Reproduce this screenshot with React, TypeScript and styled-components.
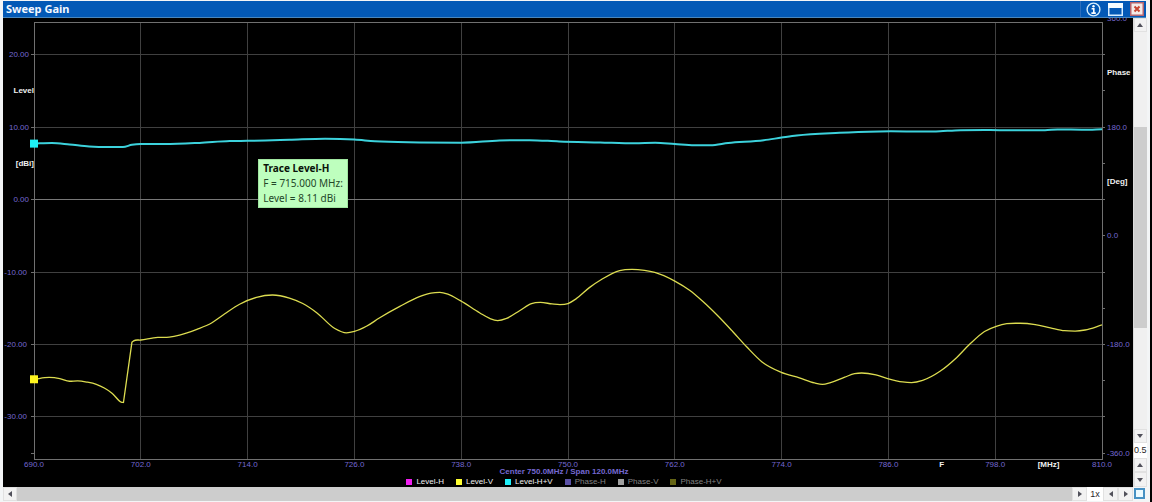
import React from "react";
import styled, { createGlobalStyle } from "styled-components";

type Sample = [number, number];

const F_MIN = 690;
const F_MAX = 810;
const LEVEL_MAX = 24.5;
const LEVEL_MIN = -35.8;
const SPAN = F_MAX - F_MIN;
const RANGE = LEVEL_MAX - LEVEL_MIN;

const xPos = (mhz: number) => `${((mhz - F_MIN) / SPAN) * 100}%`;
const yPos = (level: number) => `${((LEVEL_MAX - level) / RANGE) * 100}%`;
/* 180 degrees of phase cover 15 dB of level, with 180 deg on the 10 dBi line */
const phaseToLevel = (deg: number) => 10 + (deg - 180) / 12;

const LEVEL_HV: Sample[] = [
  [690, 7.72], [692, 7.8], [694, 7.6], [696.2, 7.33], [698.5, 7.25], [700, 7.25], [701, 7.55], [702, 7.65],
  [704.7, 7.65], [708.6, 7.82], [712, 8.07], [714, 8.1], [718.7, 8.25], [722.7, 8.4], [726, 8.28], [728.3, 8.03],
  [733.3, 7.88], [738, 7.84], [742.3, 8.15], [745.7, 8.2], [749, 8.02], [753.6, 7.88], [757.5, 7.76],
  [759.8, 7.85], [762, 7.67], [764.2, 7.5], [766, 7.5], [768, 7.8], [772, 8.18], [774, 8.55], [775.7, 8.85],
  [780.5, 9.22], [785, 9.4], [791.8, 9.43], [793.5, 9.53], [798.5, 9.58], [803.6, 9.58], [805, 9.67],
  [808, 9.63], [810, 9.7],
];

const LEVEL_V: Sample[] = [
  [690, -24.8], [691.7, -24.55], [692.9, -24.7], [694, -25.07], [694.9, -25.02], [696, -25.2], [697, -25.5],
  [697.9, -26], [698.8, -26.75], [699.8, -27.95], [700.05, -28], [701, -19.7], [701.2, -19.5], [702, -19.38],
  [703.9, -19.03], [705.2, -18.97], [706.35, -18.7], [708.3, -17.9], [709.95, -17.03], [711.4, -15.8],
  [713.1, -14.45], [715, -13.5], [716.8, -13.17], [718.7, -13.6], [720.2, -14.35], [721.8, -15.65],
  [723.8, -17.8], [725.1, -18.4], [726, -18.2], [727.4, -17.45], [728.8, -16.35], [731.1, -14.75],
  [733.3, -13.4], [734.6, -12.9], [735.6, -12.8], [736.5, -13.05], [737.9, -13.95], [740.1, -15.65],
  [741.2, -16.4], [742.1, -16.7], [743.1, -16.4], [744.6, -15.3], [745.9, -14.35], [746.9, -14.2],
  [748.2, -14.4], [749.1, -14.5], [750, -14.35], [750.9, -13.7], [752.4, -12.15], [753.8, -11],
  [755.8, -9.8], [757.2, -9.63], [758.6, -9.77], [759.75, -10.05], [762, -11.25], [763.7, -12.55],
  [765.1, -14], [766.8, -16], [768.5, -18.2], [770.1, -20.35], [771.8, -22.4], [773.9, -23.8],
  [776, -24.6], [777.7, -25.3], [778.6, -25.5], [779.5, -25.25], [781.1, -24.5], [782.2, -24.03],
  [783, -23.93], [784.6, -24.2], [785.9, -24.7], [787.6, -25.17], [788.6, -25.25], [789.85, -24.95],
  [791.8, -23.7], [793.5, -22], [795.1, -20], [796.8, -18.2], [798.2, -17.45], [799.3, -17.13],
  [800.8, -17.07], [802.5, -17.25], [804.2, -17.7], [805.8, -18.1], [807, -18.15], [808.1, -18],
  [810, -17.3],
];

/* A jump steeper than this many dB per MHz is drawn as a straight step. */
const STEP = 5;

/* Smooth cubic through the samples; tangents are flat at local extremes. */
function tracePath(samples: Sample[]): string {
  const rise = (i: number) =>
    (samples[i + 1][1] - samples[i][1]) / (samples[i + 1][0] - samples[i][0]);
  const slopes = samples.map((_, i) => {
    if (i === 0) return rise(0);
    if (i === samples.length - 1) return rise(i - 1);
    const before = rise(i - 1);
    const after = rise(i);
    if (Math.abs(before) > STEP) return after;
    if (Math.abs(after) > STEP) return before;
    if (before * after <= 0) return 0;
    const w = (samples[i][0] - samples[i - 1][0]) / (samples[i + 1][0] - samples[i - 1][0]);
    return before * (1 - w) + after * w;
  });
  return samples.reduce((d, [x, y], i) => {
    if (i === 0) return `M${x} ${-y}`;
    if (Math.abs(rise(i - 1)) > STEP) return `${d}L${x} ${-y}`;
    const [px, py] = samples[i - 1];
    const h = (x - px) / 3;
    return `${d}C${px + h} ${-(py + slopes[i - 1] * h)} ${x - h} ${-(y - slopes[i] * h)} ${x} ${-y}`;
  }, "");
}

const FREQS = [690, 702, 714, 726, 738, 750, 762, 774, 786, 798, 810];
const LEVELS = [20, 10, 0, -10, -20, -30];
const HALF_LEVELS = [15, 5, -5, -15, -25, -35];
const PHASES = [360, 180, 0, -180, -360];

const LEGEND = [
  { name: "Level-H", color: "#f01ef0", on: true },
  { name: "Level-V", color: "#ffff32", on: true },
  { name: "Level-H+V", color: "#1ef0fa", on: true },
  { name: "Phase-H", color: "#5a50a5", on: false },
  { name: "Phase-V", color: "#a0a0a0", on: false },
  { name: "Phase-H+V", color: "#646414", on: false },
];

const GlobalStyle = createGlobalStyle`
  * { box-sizing: border-box; }
  body { margin: 0; background: #000; }
`;

const Shell = styled.main`
  display: flex;
  flex-direction: column;
  height: 100vh;
  min-height: 320px;
  padding: 1px 4px 2px 3px;
  border-right: 2px solid #000;
  background: #f3f5f6;
  overflow: hidden;
`;

const TitleBar = styled.header`
  display: flex;
  align-items: center;
  flex: none;
  height: 17px;
  padding: 0 2px 0 3px;
  background: #0359b6;
  border-bottom: 1px solid #4a87bd;
`;

const Title = styled.h1`
  flex: 1;
  margin: 0;
  color: #f4f8ff;
  font: bold 11px/16px "Noto Sans", "Open Sans", sans-serif;
`;

const TitleTools = styled.div`
  display: flex;
  align-items: center;
  gap: 7px;
  height: 16px;
  padding-left: 5px;
  border-left: 1px solid #2c6fbe;
`;

const ToolButton = styled.button`
  display: flex;
  padding: 0;
  border: 0;
  background: none;

  svg { display: block; }
`;

const Body = styled.div`
  display: grid;
  grid-template: minmax(0, 1fr) 13px / minmax(0, 1fr) 13px;
  flex: 1;
  min-height: 0;
`;

const Chart = styled.section`
  position: relative;
  display: grid;
  grid-template: 4px minmax(0, 1fr) 28px / 31px minmax(0, 1fr) 31px;
  background: #000;
  overflow: hidden;
`;

const PlotArea = styled.div`
  position: relative;
  grid-area: 2 / 2;
`;

const Drawing = styled.svg`
  display: block;
  width: 100%;
  height: 100%;
  overflow: visible;
`;

const SideAxis = styled.svg<{ $column: number }>`
  grid-area: 2 / ${(p) => p.$column};
  width: 100%;
  height: 100%;
  overflow: visible;
`;

const AxisText = styled.text<{ $strong?: boolean }>`
  fill: ${(p) => (p.$strong ? "#f0f0f0" : "#7468d2")};
  font: ${(p) => (p.$strong ? "bold" : "normal")} 8px "Liberation Sans", Arial, sans-serif;
  dominant-baseline: central;
`;

const BottomAxis = styled.svg`
  grid-area: 3 / 2;
  width: 100%;
  height: 10px;
  overflow: visible;
`;

const Footer = styled.div`
  grid-area: 3 / 1 / 4 / 4;
  display: flex;
  flex-direction: column;
  align-items: center;
  padding: 8px 8px 0 0;
`;

const Caption = styled.p`
  margin: 0;
  color: #7468d2;
  font: bold 8px/10px "Liberation Sans", Arial, sans-serif;
`;

const Legend = styled.ul`
  display: flex;
  gap: 12px;
  margin: 0;
  padding: 0;
  list-style: none;
`;

const LegendItem = styled.li<{ $color: string; $on: boolean }>`
  display: flex;
  align-items: center;
  gap: 4px;
  color: ${(p) => (p.$on ? "#f0f0f0" : "#828282")};
  font: 8px/10px "Liberation Sans", Arial, sans-serif;

  &::before {
    content: "";
    width: 6px;
    height: 6px;
    background: ${(p) => p.$color};
  }
`;

const Tooltip = styled.div`
  position: absolute;
  margin-top: 18px;
  padding: 1px 4px;
  border: 1px solid #a0e6a0;
  background: #beffbe;
  color: #234628;
  font: 10px/15px "Noto Sans", "Open Sans", sans-serif;
  white-space: nowrap;

  strong { display: block; color: #0a140a; }
`;

const VerticalBar = styled.div`
  display: grid;
  grid-template-rows: 14px minmax(0, 1fr) 14px 15px 14px 15px;
  background: #f0f0f0;
  border-left: 1px solid #dcdcdc;
`;

const HorizontalBar = styled.div`
  display: grid;
  grid-template-columns: 14px minmax(0, 1fr) 15px 16px 15px 15px;
  background: #f0f0f0;
`;

const VerticalTrack = styled.div`
  display: grid;
  grid-template-rows: 95fr 201fr 101fr;
  background: #f0f0f0;
`;

const VerticalThumb = styled.div`
  grid-row: 2;
  background: #cdcdcd;
`;

const HorizontalTrack = styled.div`
  background: #cdcdcd;
`;

const ArrowButton = styled.button`
  display: grid;
  place-items: center;
  min-width: 0;
  padding: 0;
  border: 1px solid #e1e1e1;
  background: #f2f2f2;

  svg { display: block; }
`;

const Zoom = styled.output`
  background: #fff;
  color: #282828;
  font: 9px/14px "Liberation Sans", Arial, sans-serif;
  text-align: center;
`;

const FitButton = styled.button`
  margin: 1px;
  padding: 0;
  border: 2px solid #4691c3;
  background: #ebfaff;
`;

const ARROWS = {
  up: "M4 2 7 6H1Z",
  down: "M1 2H7L4 6Z",
  left: "M6 1V7L2 4Z",
  right: "M2 1V7L6 4Z",
};

function Arrow({ to, label }: { to: keyof typeof ARROWS; label: string }) {
  return (
    <ArrowButton type="button" aria-label={label}>
      <svg width="8" height="8" viewBox="0 0 8 8">
        <path d={ARROWS[to]} fill="#50505a" />
      </svg>
    </ArrowButton>
  );
}

function WindowTools() {
  return (
    <TitleTools>
      <ToolButton type="button" aria-label="Information">
        <svg width="15" height="15" viewBox="0 0 15 15">
          <circle cx="7.5" cy="7.5" r="6.4" fill="none" stroke="#d7f0ff" strokeWidth="1.4" />
          <circle cx="7.5" cy="4.3" r="1.2" fill="#fff" />
          <path d="M5.6 6.7H7.8V11M5.4 11.1H9.8" fill="none" stroke="#fff" strokeWidth="1.6" />
        </svg>
      </ToolButton>
      <ToolButton type="button" aria-label="Maximize">
        <svg width="15" height="13" viewBox="0 0 15 13">
          <rect x="0.75" y="0.75" width="13.5" height="11.5" fill="none" stroke="#d2ebff" strokeWidth="1.5" />
          <rect width="15" height="5" fill="#f5fcff" />
        </svg>
      </ToolButton>
      <ToolButton type="button" aria-label="Close">
        <svg width="14" height="14" viewBox="0 0 14 14">
          <rect x="0.75" y="0.75" width="12.5" height="12.5" fill="#f5ebe8" stroke="#b4646e" strokeWidth="1.5" />
          <path d="M4.5 4.5 9.5 9.5M9.5 4.5 4.5 9.5" stroke="#c84632" strokeWidth="2" />
        </svg>
      </ToolButton>
    </TitleTools>
  );
}

function Plot() {
  return (
    <PlotArea>
      <Drawing role="img" aria-label="Gain over frequency">
        <g stroke="#404040" shapeRendering="crispEdges">
          {FREQS.slice(1, -1).map((f) => (
            <line key={f} x1={xPos(f)} x2={xPos(f)} y1="0" y2="100%" />
          ))}
          {LEVELS.map((l) => (
            <line key={l} x1="0" x2="100%" y1={yPos(l)} y2={yPos(l)} stroke={l === 0 ? "#787878" : undefined} />
          ))}
        </g>
        <g stroke="#707070" shapeRendering="crispEdges">
          {[...LEVELS, -35].map((l) => (
            <line key={l} x1="-3" x2="0" y1={yPos(l)} y2={yPos(l)} />
          ))}
          <svg x="100%" overflow="visible">
            {[...LEVELS, ...HALF_LEVELS].map((l) => (
              <line key={l} x1="0" x2="3" y1={yPos(l)} y2={yPos(l)} />
            ))}
          </svg>
          <rect width="100%" height="100%" fill="none" />
        </g>
        <svg
          width="100%"
          height="100%"
          viewBox={`${F_MIN} ${-LEVEL_MAX} ${SPAN} ${RANGE}`}
          preserveAspectRatio="none"
          fill="none"
        >
          <path d={tracePath(LEVEL_V)} stroke="#dcdc50" strokeWidth="1.3" vectorEffect="non-scaling-stroke" />
          <path d={tracePath(LEVEL_HV)} stroke="#3cd2dc" strokeWidth="2" vectorEffect="non-scaling-stroke" />
        </svg>
        <svg x="-4" y="-4" overflow="visible">
          <rect y={yPos(LEVEL_HV[0][1])} width="8" height="8" fill="#1ef0f5" />
          <rect y={yPos(LEVEL_V[0][1])} width="8" height="8" fill="#fff51e" />
        </svg>
      </Drawing>
      <Tooltip role="tooltip" style={{ left: xPos(715.2), top: yPos(8.11) }}>
        <strong>Trace Level-H</strong>
        F = 715.000 MHz:
        <br />
        Level = 8.11 dBi
      </Tooltip>
    </PlotArea>
  );
}

export default function App() {
  return (
    <>
      <GlobalStyle />
      <Shell>
        <TitleBar>
          <Title>Sweep Gain</Title>
          <WindowTools />
        </TitleBar>
        <Body>
          <Chart>
            <SideAxis $column={1}>
              {LEVELS.map((l) => (
                <AxisText key={l} x={l < 0 ? 24 : 26} y={yPos(l)} textAnchor="end">
                  {l.toFixed(2)}
                </AxisText>
              ))}
              <AxisText $strong x="31" y={yPos(15)} textAnchor="end">Level</AxisText>
              <AxisText $strong x="31" y={yPos(5)} textAnchor="end">[dBi]</AxisText>
            </SideAxis>
            <Plot />
            <SideAxis $column={3}>
              {PHASES.map((p) => (
                <AxisText key={p} x="5" y={yPos(phaseToLevel(p))}>
                  {p.toFixed(1)}
                </AxisText>
              ))}
              <AxisText $strong x="5" y={yPos(phaseToLevel(270))}>Phase</AxisText>
              <AxisText $strong x="5" y={yPos(phaseToLevel(90))}>[Deg]</AxisText>
            </SideAxis>
            <BottomAxis>
              {FREQS.map((f) => (
                <AxisText key={f} x={xPos(f)} y="5" textAnchor="middle">
                  {f.toFixed(1)}
                </AxisText>
              ))}
              <AxisText $strong x={xPos(792)} y="5" textAnchor="middle">F</AxisText>
              <AxisText $strong x={xPos(804)} y="5" textAnchor="middle">[MHz]</AxisText>
            </BottomAxis>
            <Footer>
              <Caption>Center 750.0MHz / Span 120.0MHz</Caption>
              <Legend>
                {LEGEND.map((t) => (
                  <LegendItem key={t.name} $color={t.color} $on={t.on}>
                    {t.name}
                  </LegendItem>
                ))}
              </Legend>
            </Footer>
          </Chart>
          <VerticalBar>
            <Arrow to="up" label="Scroll up" />
            <VerticalTrack>
              <VerticalThumb />
            </VerticalTrack>
            <Arrow to="down" label="Scroll down" />
            <Zoom>0.5</Zoom>
            <Arrow to="up" label="Increase vertical zoom" />
            <Arrow to="down" label="Decrease vertical zoom" />
          </VerticalBar>
          <HorizontalBar>
            <Arrow to="left" label="Scroll left" />
            <HorizontalTrack />
            <Arrow to="right" label="Scroll right" />
            <Zoom>1x</Zoom>
            <Arrow to="left" label="Decrease horizontal zoom" />
            <Arrow to="right" label="Increase horizontal zoom" />
          </HorizontalBar>
          <FitButton type="button" aria-label="Fit to window" />
        </Body>
      </Shell>
    </>
  );
}
